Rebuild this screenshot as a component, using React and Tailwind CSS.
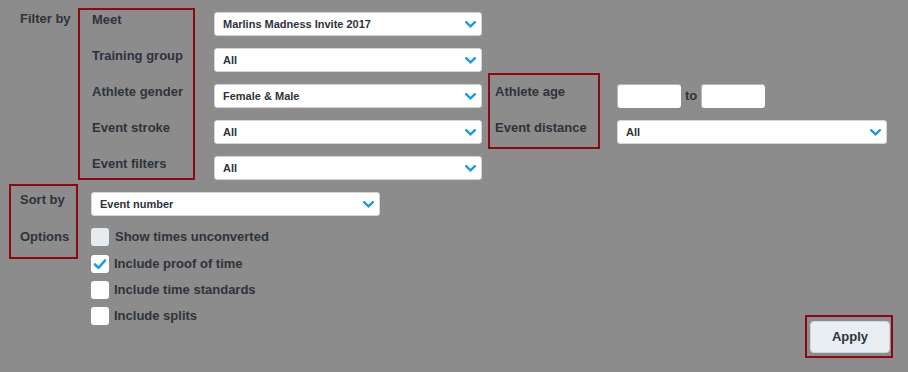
import React from "react";

function Chevron() {
  return (
    <svg width="11" height="7" viewBox="0 0 11 7" className="shrink-0">
      <path d="M1.2 1.2 L5.5 5.3 L9.8 1.2" fill="none" stroke="#1d9be0" strokeWidth="2.4" strokeLinecap="square" />
    </svg>
  );
}

function Select({ value, className }) {
  return (
    <div
      className={
        "h-[24px] bg-white rounded-[3px] border border-[#d6d6d6] flex items-center justify-between pl-[8px] pr-[5px] text-[11px] font-bold text-[#2e333b] " +
        className
      }
    >
      <span>{value}</span>
      <Chevron />
    </div>
  );
}

function Checkbox({ checked, disabled, label, gap }) {
  return (
    <div className="flex items-center h-[18px]">
      <div
        className={
          "w-[18px] h-[18px] rounded-[3px] flex items-center justify-center " +
          (disabled ? "bg-[#e6ebef]" : "bg-white")
        }
      >
        {checked && (
          <svg width="14" height="12" viewBox="0 0 14 12">
            <path d="M2 6.5 L5.5 9.8 L12 2.5" fill="none" stroke="#1d9be0" strokeWidth="2.6" strokeLinecap="round" strokeLinejoin="round" />
          </svg>
        )}
      </div>
      <span className={"text-[13px] font-bold text-[#2e333b] leading-[16px] " + gap}>{label}</span>
    </div>
  );
}

export default function App() {
  return (
    <div className="w-[908px] h-[372px] bg-[#8c8c8c] font-['Liberation_Sans',Arial,sans-serif] text-[#2e333b] overflow-hidden">
      {/* Filter block */}
      <div className="flex items-start pt-[8px]">
        <div className="w-[78px] pl-[20px] pt-[3px] text-[13px] font-bold leading-[16px]">Filter by</div>
        <div className="w-[117px] h-[172px] border-2 border-[#8b0a12] pl-[12px] pt-[2px] flex flex-col gap-[20px] text-[13px] font-bold leading-[16px]">
          <div>Meet</div>
          <div>Training group</div>
          <div>Athlete gender</div>
          <div>Event stroke</div>
          <div>Event filters</div>
        </div>
        <div className="ml-[19px] mt-[4px] w-[268px] flex flex-col gap-[12px]">
          <Select value="Marlins Madness Invite 2017" />
          <Select value="All" />
          <Select value="Female & Male" />
          <Select value="All" />
          <Select value="All" />
        </div>
        <div className="ml-[6px] mt-[65px] w-[112px] h-[76px] border-2 border-[#8b0a12] pl-[5px] pt-[9px] flex flex-col gap-[20px] text-[13px] font-bold leading-[16px]">
          <div>Athlete age</div>
          <div>Event distance</div>
        </div>
        <div className="ml-[17px] mt-[76px] flex flex-col gap-[12px]">
          <div className="flex items-center">
            <div className="w-[64px] h-[24px] bg-white rounded-[3px] border-l border-t border-[#b8b8b8]" />
            <span className="ml-[4px] mr-[4px] text-[13px] font-bold">to</span>
            <div className="w-[64px] h-[24px] bg-white rounded-[3px] border-l border-t border-[#b8b8b8]" />
          </div>
          <Select value="All" className="w-[270px]" />
        </div>
      </div>

      {/* Sort / options block */}
      <div className="flex items-start mt-[4px]">
        <div className="ml-[9px] w-[69px] h-[75px] border-2 border-[#8b0a12] pl-[9px] pt-[6px] flex flex-col gap-[21px] text-[13px] font-bold leading-[16px]">
          <div>Sort by</div>
          <div>Options</div>
        </div>
        <div className="ml-[13px] mt-[8px] flex flex-col">
          <Select value="Event number" className="w-[289px]" />
          <div className="mt-[12px] flex flex-col gap-[8px]">
            <Checkbox disabled label="Show times unconverted" gap="ml-[6px]" />
            <div className="mt-[1px]">
              <Checkbox checked label="Include proof of time" gap="ml-[5px]" />
            </div>
            <Checkbox label="Include time standards" gap="ml-[5px]" />
            <Checkbox label="Include splits" gap="ml-[5px]" />
          </div>
        </div>
        <div className="ml-auto mr-[15px] mt-[131px] border-2 border-[#8b0a12] pl-[3px] pr-[1px] pt-[4px] pb-[3px]">
          <button className="w-[80px] h-[32px] bg-[#e8eef2] rounded-[4px] border border-[#d0d6da] text-[13px] font-bold text-[#2e333b]">
            Apply
          </button>
        </div>
      </div>
    </div>
  );
}
